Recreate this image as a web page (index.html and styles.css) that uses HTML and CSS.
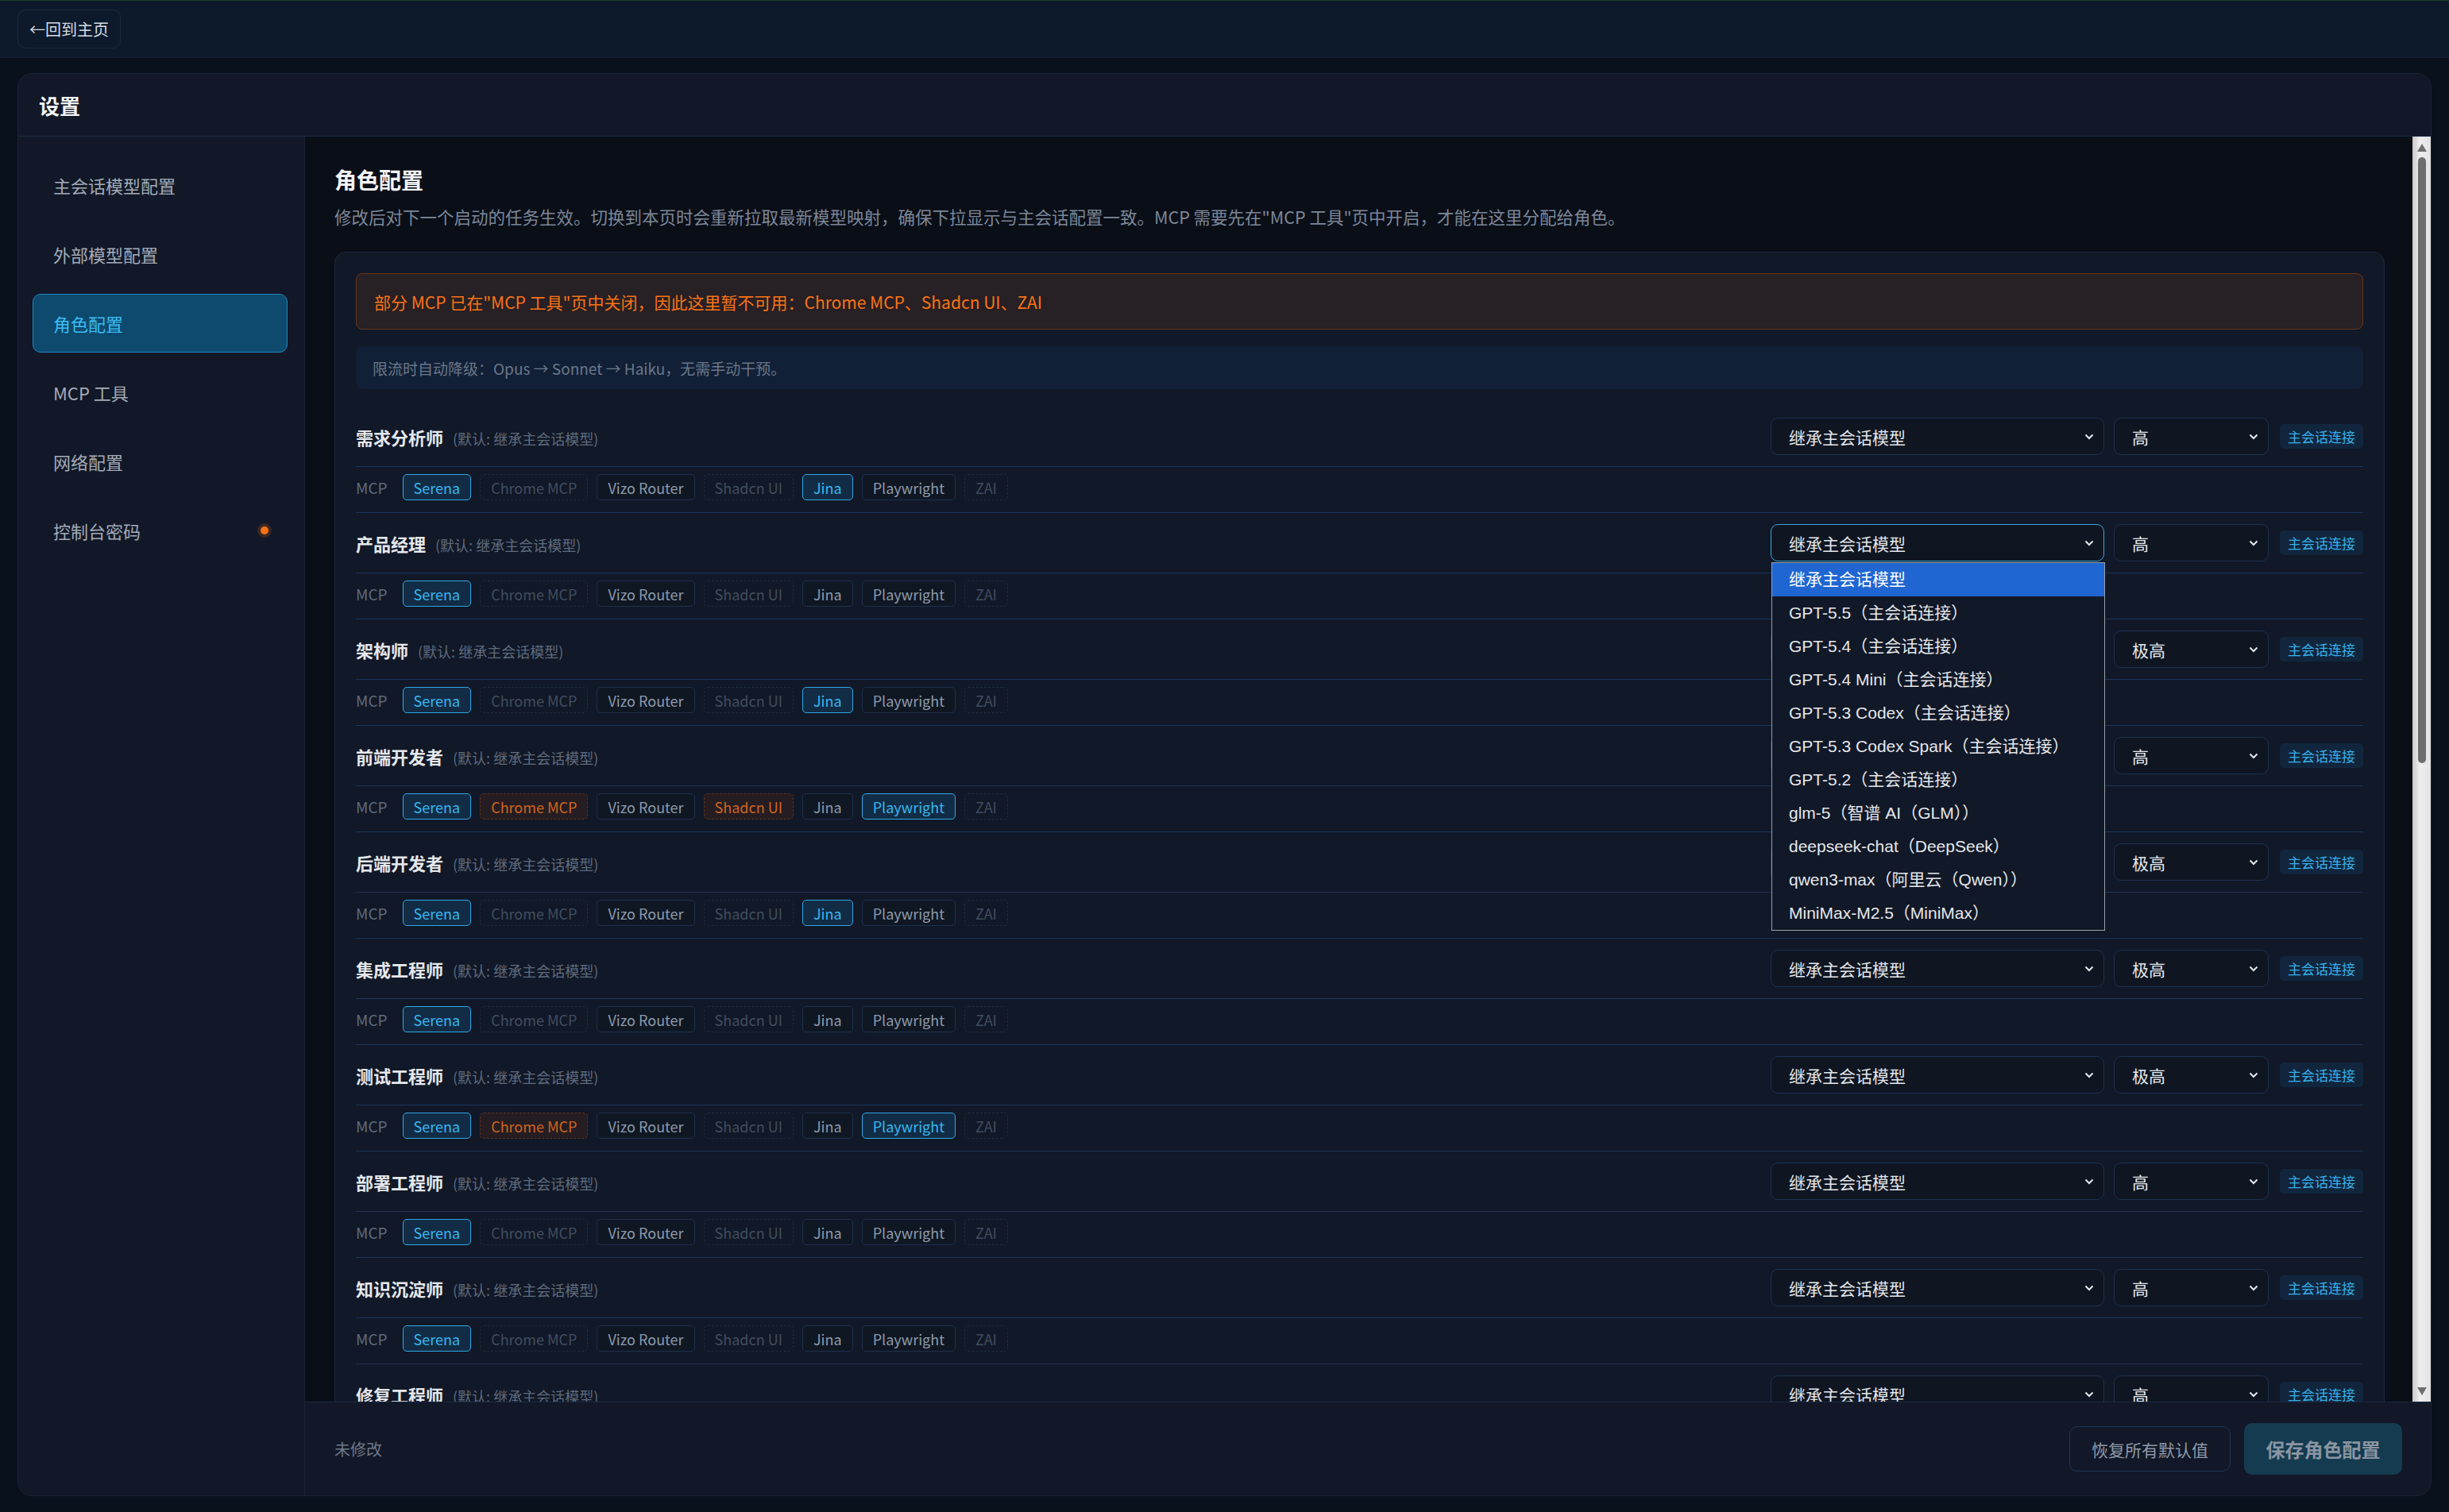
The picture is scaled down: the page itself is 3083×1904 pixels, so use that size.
FILE: index.html
```html
<html>
<head>
<title>设置 - 角色配置</title>
<link rel="stylesheet" href="styles.css">
</head>
<body>
<div class="topbar">
<button class="back-btn">←回到主页</button>
</div>
<div class="page">
<div class="panel">
<div class="panel-head">设置</div>
<div class="panel-body">
<div class="sidebar">
<div class="nav-item">主会话模型配置</div>
<div class="nav-item">外部模型配置</div>
<div class="nav-item active">角色配置</div>
<div class="nav-item">MCP 工具</div>
<div class="nav-item">网络配置</div>
<div class="nav-item">控制台密码<span class="dot"></span></div>
</div>
<div class="main">
<div class="scroll-wrap">
<div class="scroll">
<h2>角色配置</h2>
<p class="desc">修改后对下一个启动的任务生效。切换到本页时会重新拉取最新模型映射，确保下拉显示与主会话配置一致。MCP 需要先在"MCP 工具"页中开启，才能在这里分配给角色。</p>
<div class="card">
<div class="warn">部分 MCP 已在"MCP 工具"页中关闭，因此这里暂不可用：Chrome MCP、Shadcn UI、ZAI</div>
<div class="info">限流时自动降级：Opus → Sonnet → Haiku，无需手动干预。</div>
<div id="roles"></div>
</div>
</div>
<div class="scrollbar">
<span class="sb-up"></span>
<span class="sb-thumb"></span>
<span class="sb-down"></span>
</div>
</div>
<div class="footer">
<span class="status">未修改</span>
<div class="actions">
<button class="btn-reset">恢复所有默认值</button>
<button class="btn-save">保存角色配置</button>
</div>
</div>
</div>
</div>
</div>
</div>
<script>
const tools = ['Serena', 'Chrome MCP', 'Vizo Router', 'Shadcn UI', 'Jina', 'Playwright', 'ZAI'];
const closedTools = ['Chrome MCP', 'Shadcn UI', 'ZAI'];
const models = [
'继承主会话模型',
'GPT-5.5（主会话连接）',
'GPT-5.4（主会话连接）',
'GPT-5.4 Mini（主会话连接）',
'GPT-5.3 Codex（主会话连接）',
'GPT-5.3 Codex Spark（主会话连接）',
'GPT-5.2（主会话连接）',
'glm-5（智谱 AI（GLM））',
'deepseek-chat（DeepSeek）',
'qwen3-max（阿里云（Qwen））',
'MiniMax-M2.5（MiniMax）'
];
const roles = [
['需求分析师', '高', ['Serena', 'Jina']],
['产品经理', '高', ['Serena']],
['架构师', '极高', ['Serena', 'Jina']],
['前端开发者', '高', ['Serena', 'Chrome MCP', 'Shadcn UI', 'Playwright']],
['后端开发者', '极高', ['Serena', 'Jina']],
['集成工程师', '极高', ['Serena']],
['测试工程师', '极高', ['Serena', 'Chrome MCP', 'Playwright']],
['部署工程师', '高', ['Serena']],
['知识沉淀师', '高', ['Serena']],
['修复工程师', '高', ['Serena']]
];
const openRole = '产品经理';
const chev = '<svg class="chev" width="12" height="8" viewBox="0 0 12 8"><path d="M1.5 1.5 6 6l4.5-4.5" fill="none" stroke="currentColor" stroke-width="2"/></svg>';

function chipClass(tool, picked) {
if (closedTools.includes(tool)) return picked ? 'chip blocked' : 'chip off';
return picked ? 'chip on' : 'chip';
}

let html = '';
for (const [name, effort, picked] of roles) {
const open = name === openRole;
let menu = '';
if (open) {
menu = '<div class="dropdown">' + models.map((m, i) => `<div class="${i === 0 ? 'hl' : ''}">${m}</div>`).join('') + '</div>';
}
html += `<div class="role">
<div class="role-head">
<div class="role-name">${name}<span class="hint">(默认: 继承主会话模型)</span></div>
<div class="controls">
<div class="select-wrap"><div class="select model${open ? ' focus' : ''}"><span>继承主会话模型</span>${chev}</div>${menu}</div>
<div class="select effort"><span>${effort}</span>${chev}</div>
<span class="badge">主会话连接</span>
</div>
</div>
<div class="role-mcp"><span class="mcp-label">MCP</span>${tools.map(t => `<span class="${chipClass(t, picked.includes(t))}">${t}</span>`).join('')}</div>
</div>`;
}
document.getElementById('roles').innerHTML = html;
</script>
</body>
</html>
```
FILE: styles.css
```css
* {
box-sizing: border-box;
}
body {
margin: 0; height: 100vh; overflow: hidden;
display: flex; flex-direction: column;
background-color: #08111c;
font-family: "Noto Sans CJK SC", "Noto Sans", sans-serif;
color: #e5e7eb;
}
.topbar {
height: 73px; flex: none;
padding: 11px 22px;
background-color: #0c1a2b;
border-top: 1px solid #1f3a2c;
border-bottom: 1px solid #172436;
}
.back-btn {
height: 49px; padding: 0 14px;
background: transparent; border: 1px solid #1e2a3b; border-radius: 10px;
color: #d6dbe3; font-family: inherit; font-size: 20px;
}
.page {
flex: 1; min-height: 0;
padding: 19px 22px 20px;
}
.panel {
height: 100%;
display: flex; flex-direction: column;
background-color: #121827;
border: 1px solid #1a2436; border-radius: 18px;
overflow: hidden;
}
.panel-head {
height: 79px; flex: none;
display: flex; align-items: center;
padding-left: 26px;
font-size: 26px; font-weight: bold; color: #f3f4f6;
border-bottom: 1px solid #1b2a42;
}
.panel-body {
flex: 1; min-height: 0;
display: flex;
}
.sidebar {
width: 360px; flex: none;
padding: 24px 21px 0 18px;
}
.nav-item {
height: 74px; margin-bottom: 13px;
display: flex; align-items: center; justify-content: space-between;
padding: 0 23px 0 25px;
font-size: 22px; color: #a3abb8;
border: 1px solid transparent; border-radius: 10px;
}
.nav-item.active {
background-color: #0e4a6e; border-color: #1e86c0; color: #3bbcf5;
}
.dot {
width: 10px; height: 10px; border-radius: 50%;
background-color: #f97316;
box-shadow: 0 0 0 4px rgba(249, 115, 22, 0.18);
}
.main {
flex: 1; min-width: 0;
display: flex; flex-direction: column;
border-left: 1px solid #1a2436;
}
.scroll-wrap {
flex: 1; min-height: 0;
display: flex;
background-color: #0a0e17;
}
.scroll {
flex: 1; min-width: 0;
overflow: hidden;
padding: 34px 35px 40px 37px;
}
.scrollbar {
width: 23px; flex: none;
display: flex; flex-direction: column; align-items: center;
padding: 9px 0 8px;
background: linear-gradient(to right, #c9c9c9, #eeeeee 40%, #e2e2e2);
}
.sb-up {
width: 0; height: 0;
border-left: 6px solid transparent; border-right: 6px solid transparent;
border-bottom: 10px solid #707070;
}
.sb-down {
width: 0; height: 0; margin-top: auto;
border-left: 6px solid transparent; border-right: 6px solid transparent;
border-top: 10px solid #707070;
}
.sb-thumb {
width: 10px; height: 763px; margin-top: 7px;
border-radius: 5px;
background-color: #6e6e6e;
}
h2 {
margin: 0; font-size: 28px; line-height: 40px; color: #f3f4f6;
}
.desc {
margin: 13px 0 0; font-size: 21.5px; line-height: 28px; color: #7c8799;
}
.card {
margin-top: 30px; padding: 26px;
background-color: #111827;
border: 1px solid #1b2740; border-radius: 14px;
}
.warn {
height: 71px; padding: 0 22px;
display: flex; align-items: center;
background-color: #272024;
border: 1px solid #6a3618; border-radius: 8px;
font-size: 21px; color: #f97316;
}
.info {
height: 54px; margin-top: 21px; padding: 0 21px;
display: flex; align-items: center;
background-color: #112036; border-radius: 8px;
font-size: 19px; color: #6b778a;
}
#roles {
margin-top: 22px;
}
.role {
border-bottom: 1px solid #1b365a;
}
.role-head {
display: flex; align-items: center; justify-content: space-between;
padding: 14px 0;
border-bottom: 1px solid #1b365a;
}
.role-name {
font-size: 22px; font-weight: bold; color: #e5e7eb;
}
.hint {
margin-left: 12px;
font-size: 18px; font-weight: normal; color: #5f6b7d;
}
.controls {
display: flex; align-items: center;
}
.select-wrap {
position: relative;
}
.select {
height: 47px;
display: flex; align-items: center; justify-content: space-between;
padding: 0 12px 0 22px;
background-color: #0f1622;
border: 1px solid #1c3150; border-radius: 9px;
font-family: "Liberation Sans", "Noto Sans CJK SC", sans-serif; font-size: 21px; color: #e5e7eb;
}
.select.model {
width: 420px;
}
.select.effort {
width: 195px; margin-left: 12px;
}
.select.focus {
border-color: #3aa6dc;
}
.chev {
color: #e5e7eb;
}
.badge {
height: 31px; margin-left: 14px; padding: 0 10px;
display: flex; align-items: center;
background-color: #11263d; border-radius: 5px;
font-size: 17px; color: #38b0ea;
}
.dropdown {
position: absolute; left: 1px; top: 48px; z-index: 5;
width: 420px;
background-color: #111827;
border: 1px solid #9aa0a8;
font-family: "Liberation Sans", "Noto Sans CJK SC", sans-serif; font-size: 21px; color: #e5e7eb;
}
.dropdown div {
height: 42px; line-height: 42px; padding-left: 21px;
}
.dropdown .hl {
background-color: #1f66d2; color: #ffffff;
}
.role-mcp {
display: flex; align-items: center; gap: 11px;
padding: 9px 0 15px;
}
.mcp-label {
margin-right: 8px;
font-size: 19px; color: #5f6b7d;
}
.chip {
height: 33px; padding: 0 13px;
display: flex; align-items: center;
background-color: #0f1723;
border: 1px solid #1d314d; border-radius: 5px;
font-size: 18px; color: #8d9aac;
}
.chip.on {
background-color: #132c45; border-color: #2ea8e6; color: #38b6f0;
}
.chip.off {
background: transparent; border-style: dashed; border-color: #1f2c3e; color: #414d5e;
}
.chip.blocked {
background-color: #251d22; border-style: dashed; border-color: #5b3220; color: #d0651f;
}
.footer {
height: 118px; flex: none;
display: flex; align-items: center; justify-content: space-between;
padding: 0 36px 0 37px;
background-color: #121827;
border-top: 1px solid #1b2a42;
}
.status {
font-size: 20px; color: #6c7789;
}
.actions {
display: flex; align-items: center; gap: 17px;
}
.btn-reset {
width: 203px; height: 57px;
background: transparent;
border: 1px solid #1f3656; border-radius: 10px;
font-family: inherit; font-size: 21px; color: #8e99a9;
}
.btn-save {
width: 199px; height: 65px;
background-color: #143b50;
border: none; border-radius: 10px;
font-family: inherit; font-size: 24px; font-weight: bold; color: #8a95a2;
}
```
